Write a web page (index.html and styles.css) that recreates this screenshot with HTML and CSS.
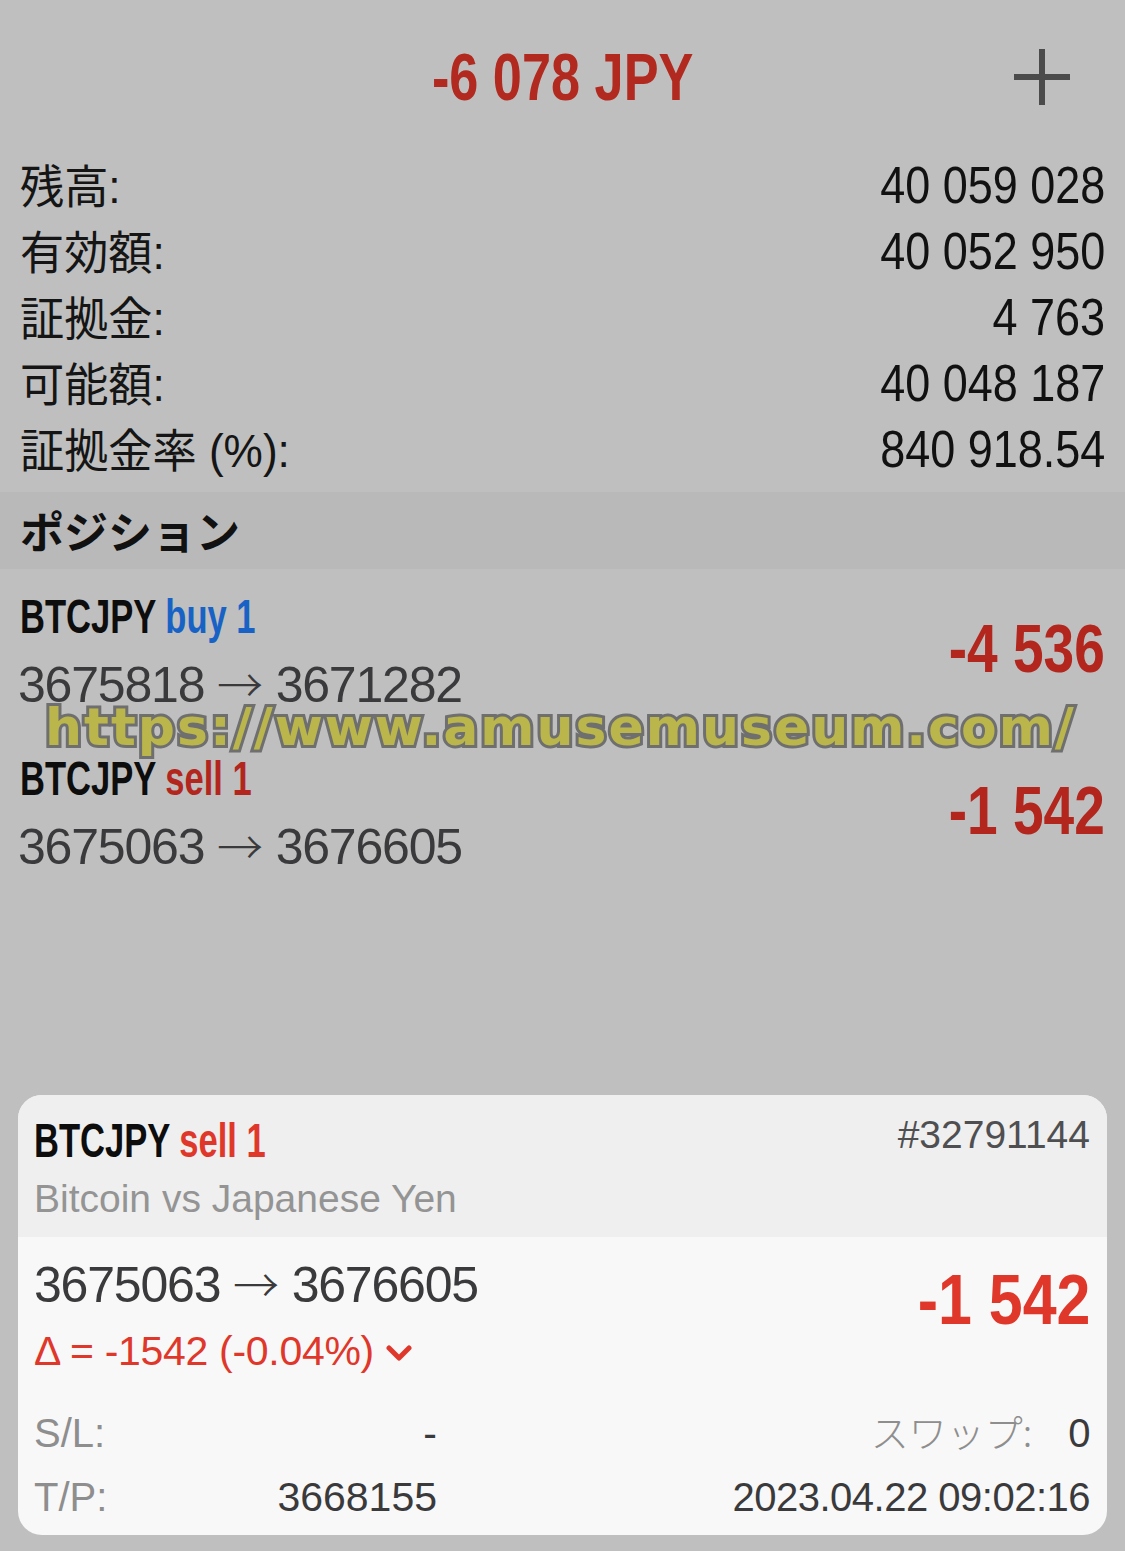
FILE: index.html
```html
<!DOCTYPE html>
<html lang="ja">
<head>
<meta charset="utf-8">
<title>Trade</title>
<link rel="stylesheet" href="styles.css">
</head>
<body>
<div class="page">
  <header class="top">
    <div></div>
    <div class="total">-6 078 JPY</div>
    <svg class="plus" width="56" height="56" viewBox="0 0 56 56" aria-hidden="true">
      <path d="M28 0 V56 M0 28 H56" stroke="#4b4b4b" stroke-width="6" fill="none"/>
    </svg>
  </header>

  <section class="summary">
    <div class="srow"><span class="lbl">残高:</span><span class="val">40 059 028</span></div>
    <div class="srow"><span class="lbl">有効額:</span><span class="val">40 052 950</span></div>
    <div class="srow"><span class="lbl">証拠金:</span><span class="val">4 763</span></div>
    <div class="srow"><span class="lbl">可能額:</span><span class="val">40 048 187</span></div>
    <div class="srow"><span class="lbl">証拠金率 (%):</span><span class="val">840 918.54</span></div>
  </section>

  <div class="band">ポジション</div>

  <section class="positions">
    <div class="pos">
      <div class="pos-left">
        <div class="sym">BTCJPY <span class="buy">buy 1</span></div>
        <div class="prices">3675818 <span class="arrow">→</span> 3671282</div>
      </div>
      <div class="pl">-4 536</div>
    </div>
    <div class="pos">
      <div class="pos-left">
        <div class="sym">BTCJPY <span class="sell">sell 1</span></div>
        <div class="prices">3675063 <span class="arrow">→</span> 3676605</div>
      </div>
      <div class="pl">-1 542</div>
    </div>
  </section>

  <div class="watermark">https://www.amusemuseum.com/</div>

  <section class="card">
    <div class="card-head">
      <div class="card-title">
        <div class="sym">BTCJPY <span class="sell-b">sell 1</span></div>
        <div class="ticket">#32791144</div>
      </div>
      <div class="desc">Bitcoin vs Japanese Yen</div>
    </div>
    <div class="card-body">
      <div class="card-main">
        <div class="card-left">
          <div class="prices card-prices">3675063 <span class="arrow">→</span> 3676605</div>
          <div class="delta">Δ = -1542 (-0.04%)
            <svg class="chev" width="26" height="18" viewBox="0 0 26 18" aria-hidden="true">
              <path d="M3 4 L13 14 L23 4" stroke="#e0372b" stroke-width="5" fill="none" stroke-linecap="round" stroke-linejoin="round"/>
            </svg>
          </div>
        </div>
        <div class="card-pl">-1 542</div>
      </div>
      <div class="frow frow-first">
        <span class="flbl">S/L:</span>
        <span class="fval fval-sl">-</span>
        <span class="fright"><span class="swap">スワップ:</span><span class="fval">0</span></span>
      </div>
      <div class="frow">
        <span class="flbl">T/P:</span>
        <span class="fval fval-sl">3668155</span>
        <span class="fright"><span class="fval">2023.04.22 09:02:16</span></span>
      </div>
    </div>
  </section>
</div>
</body>
</html>
```

FILE: styles.css
```css
html, body {
  margin: 0;
  padding: 0;
  background: #bfbfbf;
}

.page {
  position: relative;
  width: 1125px;
  height: 1551px;
  display: flex;
  flex-direction: column;
  font-family: "Liberation Sans", "Noto Sans CJK JP", sans-serif;
  color: #111;
}

.top {
  display: grid;
  grid-template-columns: 1fr auto 1fr;
  align-items: center;
  padding-top: 44px;
  height: 66px;
}

.total {
  font-family: "Liberation Sans", sans-serif;
  font-weight: 700;
  font-size: 67px;
  line-height: 66px;
  color: #b22a1f;
  transform: scaleX(0.78);
  transform-origin: center;
}

.plus {
  justify-self: end;
  margin-right: 55px;
}

.summary {
  margin-top: 42px;
  padding: 0 20px;
}

.srow {
  display: flex;
  justify-content: space-between;
  align-items: baseline;
  height: 66px;
  line-height: 66px;
}

.lbl {
  font-family: "Liberation Sans", "Noto Sans CJK JP", sans-serif;
  font-size: 46px;
  color: #151515;
  transform: scaleX(0.96);
  transform-origin: left center;
}

.val {
  font-family: "Liberation Sans", sans-serif;
  font-size: 52px;
  color: #111;
  transform: scaleX(0.865);
  transform-origin: right center;
}

.band {
  margin-top: 10px;
  height: 77px;
  line-height: 77px;
  background: #b9b9b9;
  padding-left: 20px;
  font-family: "Noto Sans CJK JP", sans-serif;
  font-weight: 700;
  font-size: 44px;
  color: #111;
}

.positions {
  padding: 0 20px 0 18px;
}

.pos {
  display: flex;
  justify-content: space-between;
  align-items: center;
  padding: 13px 0 11px;
}

.sym {
  font-family: "Liberation Sans", sans-serif;
  font-weight: 700;
  font-size: 48px;
  line-height: 69px;
  color: #0d0d0d;
  transform: scaleX(0.72);
  transform-origin: left center;
  white-space: nowrap;
}

.positions .sym {
  margin-left: 2px;
}

.buy { color: #1862c6; }
.sell { color: #b3261e; }
.sell-b { color: #e0372b; }

.prices {
  font-family: "Liberation Sans", sans-serif;
  font-size: 50px;
  line-height: 69px;
  letter-spacing: -1.2px;
  color: #3a3a3c;
  white-space: nowrap;
}

.arrow {
  font-family: "Noto Sans CJK JP", sans-serif;
  font-weight: 300;
  font-size: 46px;
  line-height: 0;
  letter-spacing: 0;
}

.pl {
  font-family: "Liberation Sans", sans-serif;
  font-weight: 700;
  font-size: 68px;
  line-height: 80px;
  margin-bottom: 6px;
  color: #b3261e;
  transform: scaleX(0.81);
  transform-origin: right center;
}

.watermark {
  position: absolute;
  left: 45px;
  top: 701px;
  font-family: "DejaVu Sans", sans-serif;
  font-weight: 700;
  font-size: 52px;
  line-height: 52px;
  letter-spacing: 2px;
  color: #bab64b;
  -webkit-text-stroke: 6px #6f6f6f;
  paint-order: stroke fill;
  white-space: nowrap;
}

.card {
  margin: auto 18px 16px;
  height: 440px;
  border-radius: 24px;
  overflow: hidden;
  background: #f8f8f8;
  display: flex;
  flex-direction: column;
}

.card-head {
  background: #efefef;
  padding: 16px 17px 11px 16px;
}

.card-title {
  display: flex;
  justify-content: space-between;
  align-items: flex-start;
}

.card-title .sym {
  line-height: 60px;
}

.ticket {
  font-family: "Liberation Sans", sans-serif;
  font-size: 39px;
  line-height: 60px;
  margin-top: -6px;
  color: #4f4f52;
}

.desc {
  font-family: "Liberation Sans", sans-serif;
  font-size: 39px;
  line-height: 55px;
  color: #949494;
}

.card-body {
  flex: 1;
  padding: 15px 17px 0 16px;
}

.card-main {
  display: flex;
  justify-content: space-between;
  align-items: flex-start;
}

.card-prices {
  line-height: 67px;
}

.delta {
  font-family: "Liberation Sans", sans-serif;
  font-size: 41px;
  line-height: 64px;
  letter-spacing: -0.3px;
  color: #e0372b;
  display: flex;
  align-items: center;
  gap: 12px;
}

.chev {
  margin-top: 4px;
}

.card-pl {
  margin-top: 11px;
  font-family: "Liberation Sans", sans-serif;
  font-weight: 700;
  font-size: 70px;
  line-height: 74px;
  color: #e0372b;
  transform: scaleX(0.87);
  transform-origin: right center;
}

.frow {
  display: grid;
  grid-template-columns: 120px 283px 1fr;
  align-items: baseline;
  height: 66px;
  line-height: 66px;
}

.frow-first {
  margin-top: 15px;
}

.flbl {
  font-family: "Liberation Sans", sans-serif;
  font-size: 40px;
  color: #8e8e8e;
}

.fval {
  font-family: "Liberation Sans", sans-serif;
  font-size: 40px;
  letter-spacing: -0.5px;
  color: #3a3a3c;
}

.fval-sl {
  text-align: right;
  font-size: 41px;
  letter-spacing: 0;
}

.fright {
  text-align: right;
}

.swap {
  font-family: "Noto Sans CJK JP", sans-serif;
  font-weight: 300;
  font-size: 38px;
  color: #8e8e8e;
  margin-right: 36px;
}
```
